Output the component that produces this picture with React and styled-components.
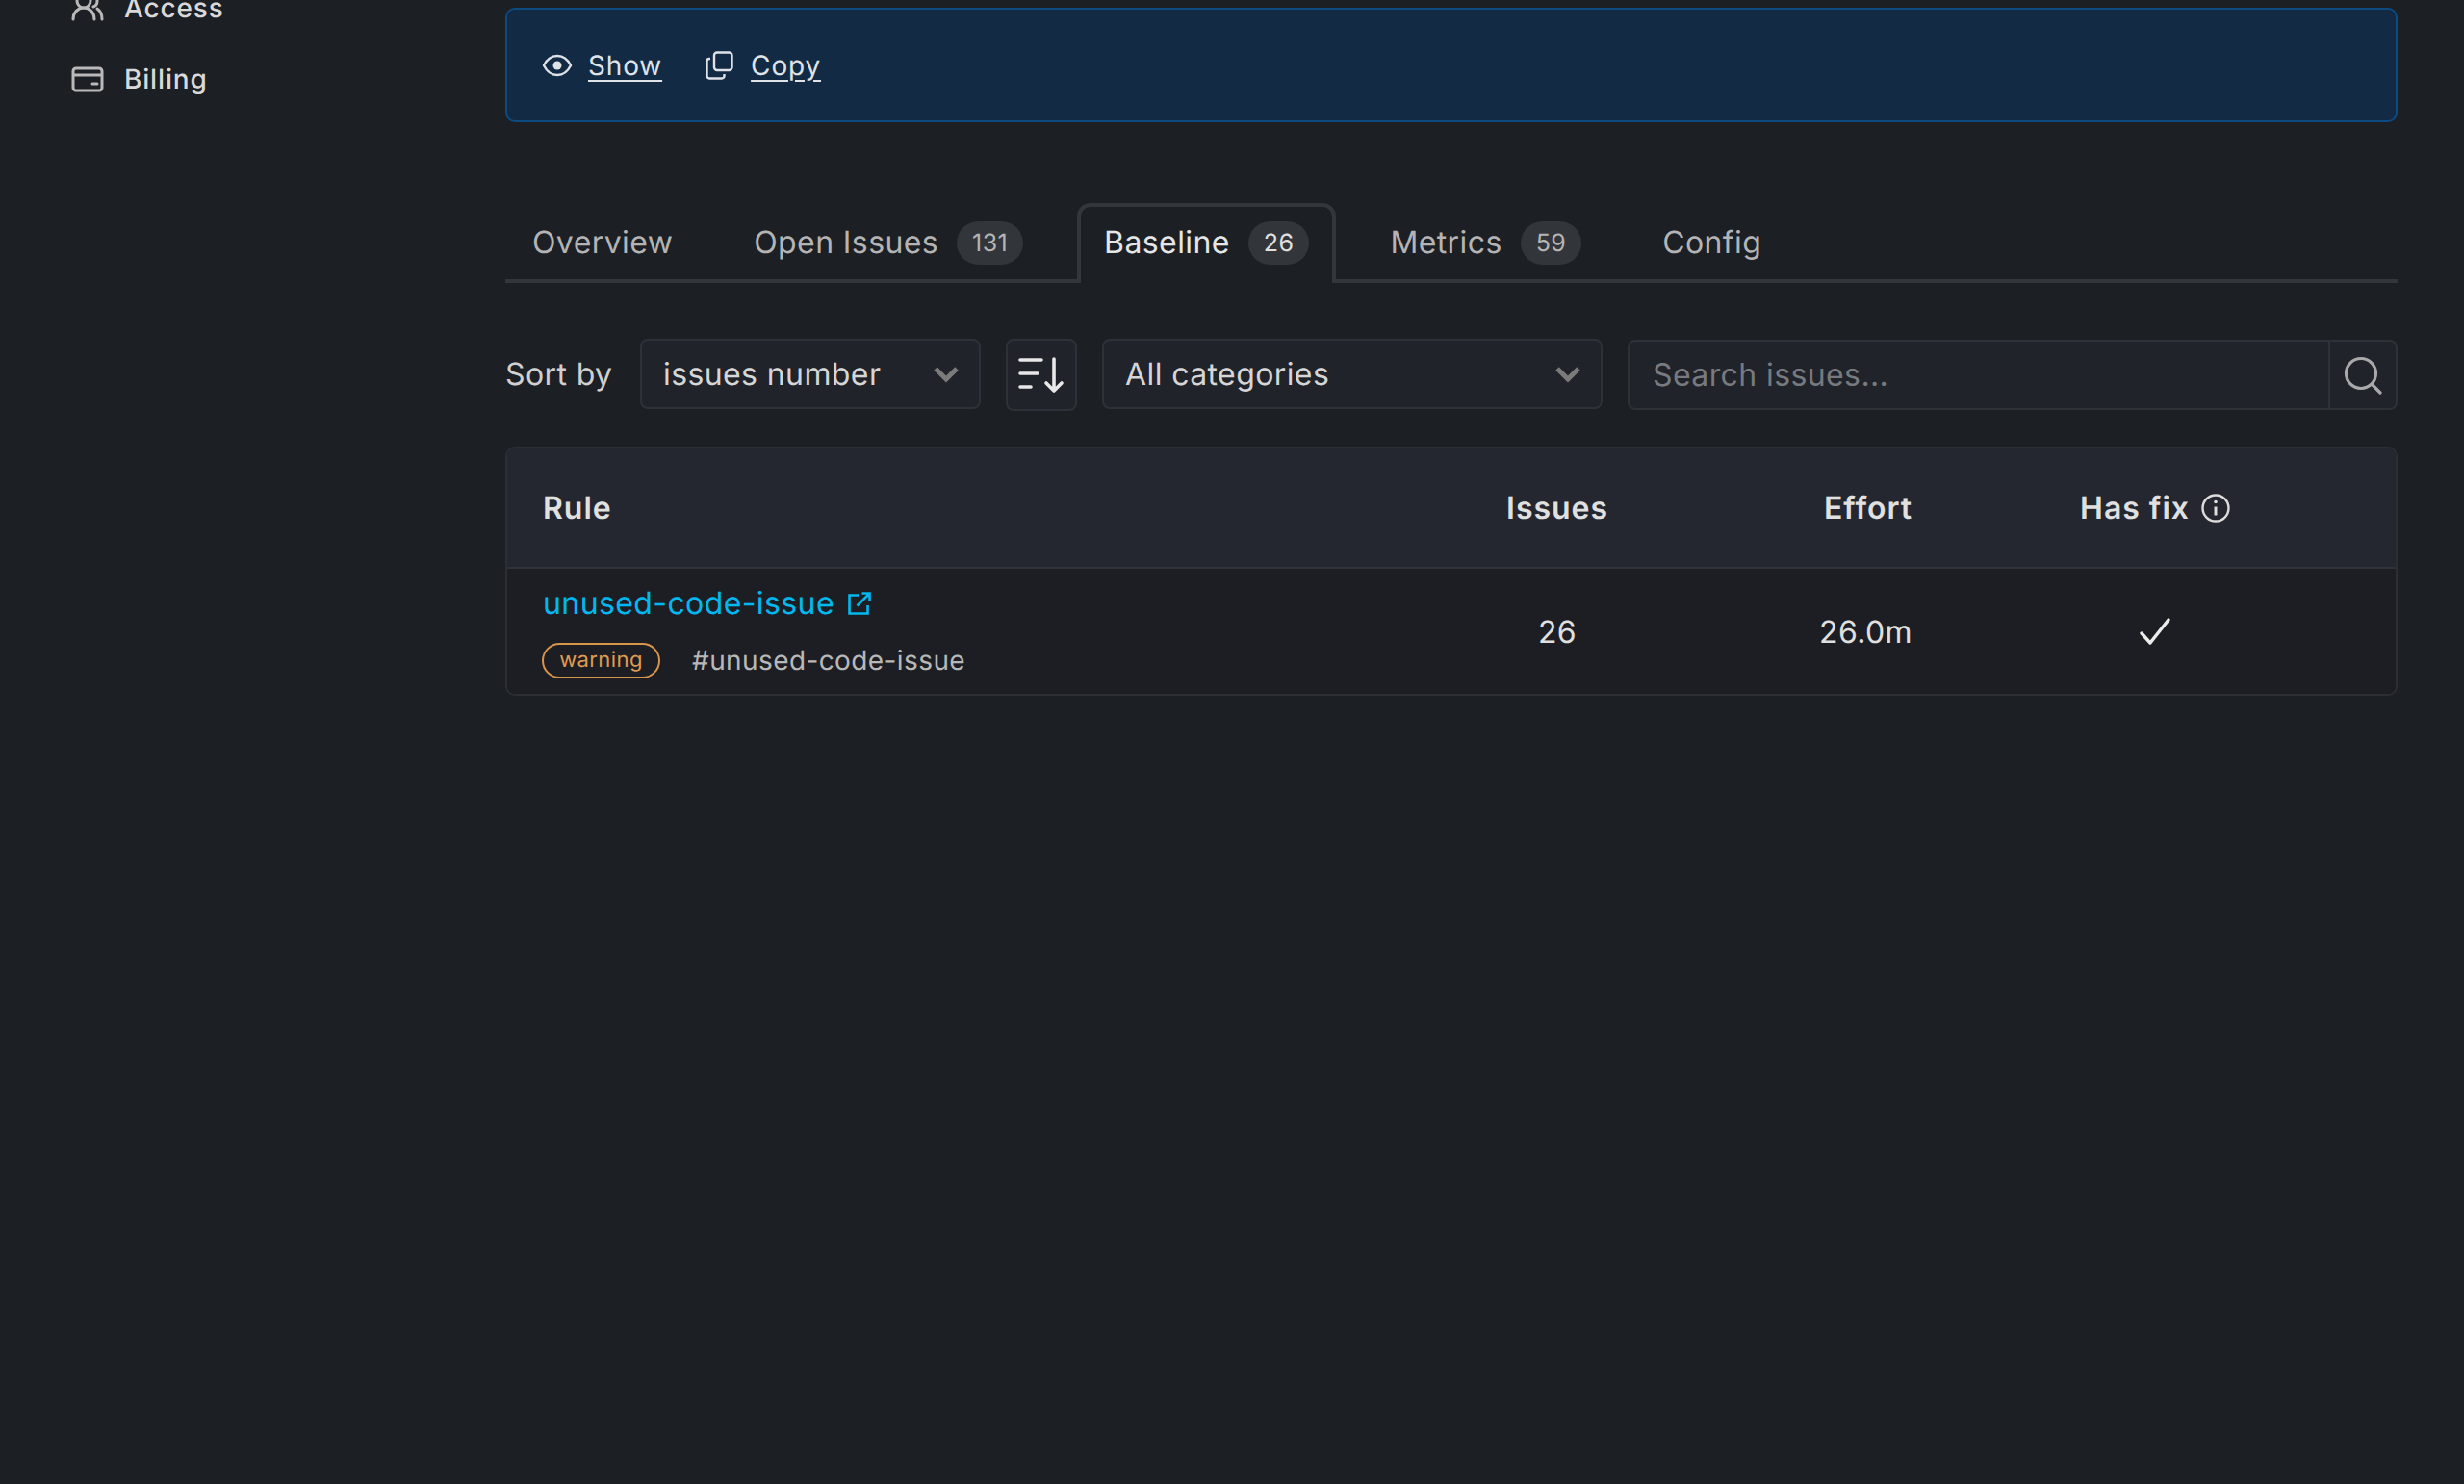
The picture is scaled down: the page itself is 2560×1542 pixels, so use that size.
import React from 'react';
import styled, { createGlobalStyle } from 'styled-components';

const GlobalStyle = createGlobalStyle`
  html, body {
    margin: 0;
    padding: 0;
    background: #1c1f24;
    font-family: Inter, "Noto Sans", sans-serif;
    letter-spacing: 0.025em;
    text-rendering: geometricPrecision;
    color: #e4e4e4;
  }
  * {
    box-sizing: border-box;
  }
`;

const Page = styled.div`
  display: flex;
  height: 1542px;
  overflow: hidden;
  background: #1c1f24;
`;

const Sidebar = styled.nav`
  width: 525px;
  flex: none;
  margin-top: -12px;
  padding-left: 74px;
  display: flex;
  flex-direction: column;
  gap: 34px;
`;

const NavItem = styled.a`
  display: flex;
  align-items: center;
  gap: 21px;
  height: 40px;
  font-size: 28px;
  font-weight: 500;
  letter-spacing: 0.03em;
  color: #d9d9d9;
  svg {
    flex: none;
  }
`;

const Main = styled.main`
  flex: 1;
  min-width: 0;
  padding: 8px 69px 0 0;
`;

const Banner = styled.div`
  display: flex;
  align-items: center;
  gap: 45px;
  height: 119px;
  padding: 0 36px;
  background: #132a44;
  border: 2px solid #0c4a80;
  border-radius: 10px;
`;

const BannerAction = styled.a`
  display: flex;
  align-items: center;
  gap: ${({ gap }) => gap}px;
  font-size: 28px;
  letter-spacing: 0.03em;
  color: #dfe3e8;
  span {
    text-decoration: underline;
    text-underline-offset: 5px;
    text-decoration-thickness: 2px;
  }
`;

const TabList = styled.div`
  display: flex;
  gap: 28px;
  height: 83px;
  margin-top: 84px;
  border-bottom: 4px solid #33363b;
`;

const Tab = styled.div`
  display: flex;
  align-items: center;
  gap: 19px;
  height: 83px;
  padding: 0 24px 6px;
  font-size: 32px;
  color: ${({ active }) => (active ? '#e6e6e6' : '#b4b4b4')};
  background: ${({ active }) => (active ? '#1c1f24' : 'transparent')};
  border: 4px solid ${({ active }) => (active ? '#33363b' : 'transparent')};
  border-bottom: none;
  border-radius: 14px 14px 0 0;
`;

const Count = styled.span`
  display: flex;
  align-items: center;
  justify-content: center;
  height: 45px;
  min-width: 62px;
  margin-top: 2px;
  padding: 0 16px;
  border-radius: 23px;
  background: #32353a;
  font-size: 25px;
  color: ${({ active }) => (active ? '#e0e0e0' : '#b4b4b4')};
`;

const Toolbar = styled.div`
  display: flex;
  align-items: flex-start;
  gap: 26px;
  margin-top: 58px;
`;

const SortLabel = styled.label`
  display: flex;
  align-items: center;
  min-width: 114px;
  height: 73px;
  font-size: 32px;
  color: #d0d0d0;
`;

const Select = styled.div`
  display: flex;
  align-items: center;
  justify-content: space-between;
  width: ${({ width }) => width}px;
  height: 73px;
  padding: 0 20px 0 22px;
  background: #20232a;
  border: 2px solid #2e3137;
  border-radius: 8px;
  font-size: 32px;
  color: #d6d6d6;
`;

const SortButton = styled.button`
  display: flex;
  align-items: center;
  justify-content: center;
  width: 74px;
  height: 75px;
  padding: 0;
  background: #20232a;
  border: 2px solid #2e3137;
  border-radius: 8px;
`;

const Search = styled.div`
  flex: 1;
  display: flex;
  height: 73px;
  margin-top: 1px;
  background: #20232a;
  border: 2px solid #2e3137;
  border-radius: 8px;
`;

const SearchInput = styled.input`
  flex: 1;
  min-width: 0;
  padding: 0 24px;
  background: none;
  border: none;
  outline: none;
  font-family: inherit;
  font-size: 32px;
  letter-spacing: inherit;
  color: #d6d6d6;
  &::placeholder {
    color: #777a7e;
    opacity: 1;
  }
`;

const SearchIcon = styled.div`
  display: flex;
  align-items: center;
  justify-content: center;
  width: 70px;
  flex: none;
  border-left: 2px solid #2e3137;
`;

const Table = styled.div`
  margin-top: 37px;
  border: 2px solid #2b2e34;
  border-radius: 10px;
  overflow: hidden;
  background: #1c1e23;
`;

const Row = styled.div`
  display: grid;
  grid-template-columns: 963px 256px 388px 210px 1fr;
  align-items: center;
  height: ${({ height }) => height}px;
  background: ${({ head }) => (head ? '#24272f' : '#1c1e23')};
  border-bottom: ${({ head }) => (head ? '2px solid #2f3238' : 'none')};
`;

const HeadCell = styled.div`
  display: flex;
  align-items: center;
  justify-content: ${({ align }) => align || 'center'};
  gap: 12px;
  padding: ${({ align }) => (align === 'flex-start' ? '0 0 0 37px' : align === 'flex-end' ? '0 147px 0 0' : '0')};
  font-size: 32px;
  font-weight: 600;
  letter-spacing: 0.03em;
  color: #e0e0e0;
  white-space: nowrap;
`;

const Cell = styled.div`
  display: flex;
  align-items: center;
  justify-content: ${({ align }) => align || 'center'};
  padding: ${({ align }) => (align === 'flex-end' ? '0 147px 0 0' : '0')};
  font-size: 32px;
  color: #e0e0e0;
`;

const RuleCell = styled.div`
  display: flex;
  flex-direction: column;
  gap: 20px;
  padding-left: 37px;
  margin-top: -2px;
`;

const RuleLink = styled.a`
  display: flex;
  align-items: center;
  gap: 14px;
  height: 42px;
  font-size: 32px;
  color: #00b9f0;
`;

const RuleMeta = styled.div`
  display: flex;
  align-items: center;
  gap: 33px;
  font-size: 28px;
  color: #b8b8b8;
`;

const Severity = styled.span`
  display: flex;
  align-items: center;
  justify-content: center;
  width: 123px;
  height: 37px;
  margin-left: -1px;
  border: 2px solid #d8934c;
  border-radius: 19px;
  font-size: 22px;
  color: #e09a50;
`;

const Chevron = () => (
  <svg width="28" height="18" viewBox="0 0 28 18" fill="none" stroke="#7b7b7b" strokeWidth="5">
    <path d="M3 3l11 11L25 3" />
  </svg>
);

const App = () => (
  <Page>
    <GlobalStyle />
    <Sidebar>
      <NavItem>
        <svg width="34" height="30" viewBox="0 0 34 30" fill="none" stroke="#b9b9b9" strokeWidth="3" strokeLinecap="round">
          <circle cx="13" cy="8" r="7" />
          <path d="M2 27c0-7 5-12 11-12s11 5 11 12" />
          <path d="M23 2c3 1 4 3 4 6s-1 5-4 6" />
          <path d="M27 16c3 2 5 6 5 11" />
        </svg>
        Access
      </NavItem>
      <NavItem>
        <svg width="34" height="27" viewBox="0 0 34 27" fill="none" stroke="#b9b9b9" strokeWidth="3">
          <rect x="2" y="2" width="30" height="23" rx="3" />
          <path d="M2 9h30" />
          <path d="M22 18h5" strokeLinecap="round" />
        </svg>
        Billing
      </NavItem>
    </Sidebar>
    <Main>
      <Banner>
        <BannerAction gap={16}>
          <svg width="32" height="24" viewBox="0 0 32 24" fill="none" stroke="#dfe3e8" strokeWidth="2.4">
            <path d="M2 12C5 6 10 2 16 2s11 4 14 10c-3 6-8 10-14 10S5 18 2 12z" />
            <circle cx="16" cy="12" r="4.5" fill="#dfe3e8" stroke="none" />
          </svg>
          <span>Show</span>
        </BannerAction>
        <BannerAction gap={18}>
          <svg width="29" height="30" viewBox="0 0 29 30" fill="none" stroke="#dfe3e8" strokeWidth="2.4">
            <rect x="9" y="1.5" width="18.5" height="18.5" rx="3" />
            <path d="M5 8H4a2.5 2.5 0 0 0-2.5 2.5V26A2.5 2.5 0 0 0 4 28.500h13a2.500 2.500 0 0 0 2.500-2.500v-2" />
          </svg>
          <span>Copy</span>
        </BannerAction>
      </Banner>

      <TabList>
        <Tab>Overview</Tab>
        <Tab>
          Open Issues <Count>131</Count>
        </Tab>
        <Tab active>
          Baseline <Count active>26</Count>
        </Tab>
        <Tab>
          Metrics <Count>59</Count>
        </Tab>
        <Tab>Config</Tab>
      </TabList>

      <Toolbar>
        <SortLabel>Sort by</SortLabel>
        <Select width={354}>
          issues number <Chevron />
        </Select>
        <SortButton>
          <svg width="48" height="38" viewBox="0 0 48 38" fill="none" stroke="#e8e8e8" strokeWidth="3.600" strokeLinecap="round" strokeLinejoin="round">
            <path d="M2 3h22M2 17h18M2 31h11" />
            <path d="M37 2v33M29 27l8 8 8-8" />
          </svg>
        </SortButton>
        <Select width={520}>
          All categories <Chevron />
        </Select>
        <Search>
          <SearchInput placeholder="Search issues..." readOnly />
          <SearchIcon>
            <svg width="40" height="40" viewBox="0 0 40 40" fill="none" stroke="#a9a9a9" strokeWidth="3.200" strokeLinecap="round">
              <circle cx="18" cy="18" r="15.500" />
              <path d="M29.500 29.500L38 38" />
            </svg>
          </SearchIcon>
        </Search>
      </Toolbar>

      <Table>
        <Row head height={125}>
          <HeadCell align="flex-start">Rule</HeadCell>
          <HeadCell>Issues</HeadCell>
          <HeadCell align="flex-end">Effort</HeadCell>
          <HeadCell>
            Has fix
            <svg width="30" height="30" viewBox="0 0 30 30" fill="none" stroke="#dcdcdc" strokeWidth="2.400">
              <circle cx="15" cy="15" r="13.500" />
              <path d="M15 13.500v9" strokeWidth="3" />
              <circle cx="15" cy="8.500" r="1.800" fill="#dcdcdc" stroke="none" />
            </svg>
          </HeadCell>
          <div />
        </Row>
        <Row height={130}>
          <RuleCell>
            <RuleLink>
              unused-code-issue
              <svg width="24" height="24" viewBox="0 0 24 24" fill="none" stroke="#00b9f0" strokeWidth="2.600">
                <path d="M11 3.500H1.500v19h19V14" />
                <path d="M9.500 14.500L22 2M14.500 1.500h8v8" />
              </svg>
            </RuleLink>
            <RuleMeta>
              <Severity>warning</Severity>
              #unused-code-issue
            </RuleMeta>
          </RuleCell>
          <Cell>26</Cell>
          <Cell align="flex-end">26.0m</Cell>
          <Cell>
            <svg width="32" height="28" viewBox="0 0 32 28" fill="none" stroke="#ececec" strokeWidth="3.400" strokeLinecap="round" strokeLinejoin="round">
              <path d="M2 16l9 10L30 2" />
            </svg>
          </Cell>
          <div />
        </Row>
      </Table>
    </Main>
  </Page>
);

export default App;
